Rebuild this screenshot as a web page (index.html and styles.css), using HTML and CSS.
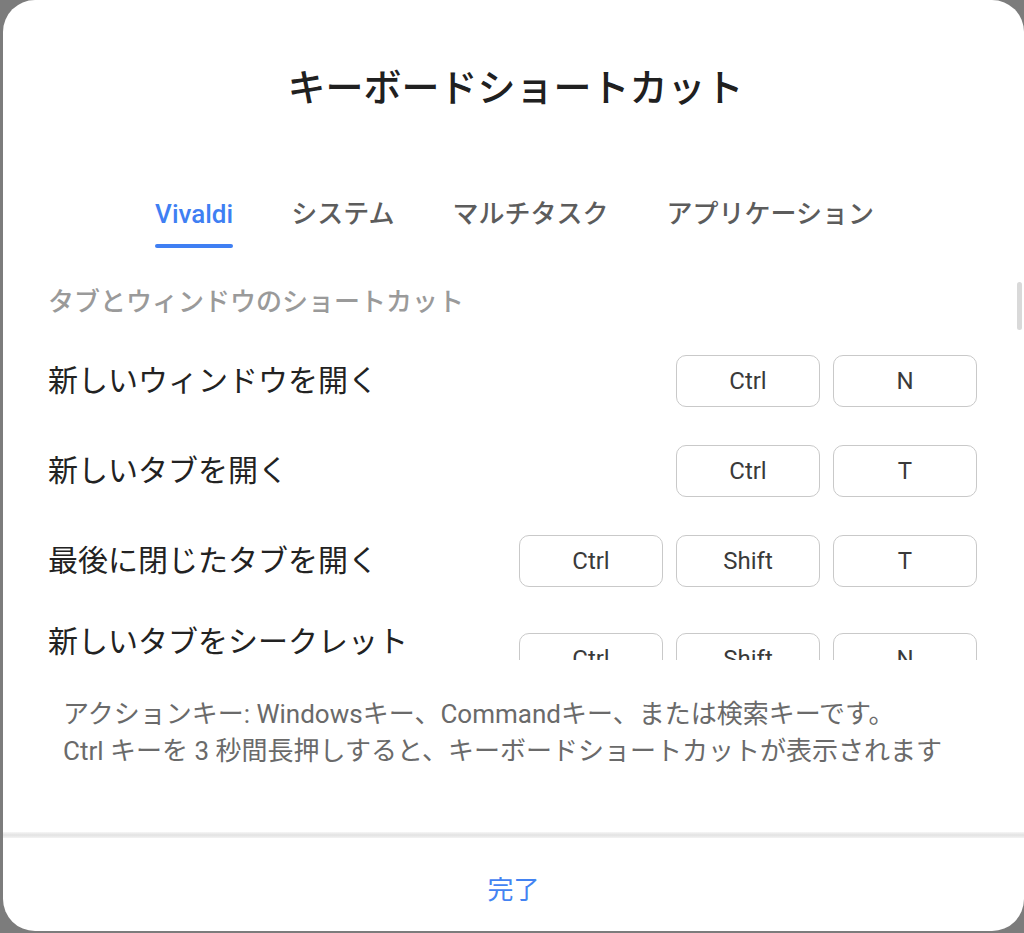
FILE: index.html
```html
<!DOCTYPE html>
<html lang="ja">
<head>
  <meta charset="UTF-8" />
  <title>キーボードショートカット</title>
  <link rel="stylesheet" href="styles.css">
</head>
<body>
  <div class="dialog">
    <h1 class="title">キーボードショートカット</h1>

    <div class="tabs">
      <div class="tab active">Vivaldi</div>
      <div class="tab">システム</div>
      <div class="tab">マルチタスク</div>
      <div class="tab">アプリケーション</div>
    </div>

    <div class="scroll">
      <div class="list">
        <div class="section">タブとウィンドウのショートカット</div>

        <div class="row">
          <div class="label">新しいウィンドウを開く</div>
          <div class="keys">
            <span class="key">Ctrl</span>
            <span class="key">N</span>
          </div>
        </div>

        <div class="row">
          <div class="label">新しいタブを開く</div>
          <div class="keys">
            <span class="key">Ctrl</span>
            <span class="key">T</span>
          </div>
        </div>

        <div class="row">
          <div class="label">最後に閉じたタブを開く</div>
          <div class="keys">
            <span class="key">Ctrl</span>
            <span class="key">Shift</span>
            <span class="key">T</span>
          </div>
        </div>

        <div class="row">
          <div class="label">新しいタブをシークレットウィンドウで開く</div>
          <div class="keys">
            <span class="key">Ctrl</span>
            <span class="key">Shift</span>
            <span class="key">N</span>
          </div>
        </div>
      </div>
      <div class="thumb"></div>
    </div>

    <div class="info">
      アクションキー: Windowsキー、Commandキー、または検索キーです。<br>
      Ctrl キーを 3 秒間長押しすると、キーボードショートカットが表示されます
    </div>

    <div class="divider"></div>
    <div class="footer">
      <button class="done">完了</button>
    </div>
  </div>
</body>
</html>
```

FILE: styles.css
```css
body {
  margin: 0;
  padding: 0;
  background-color: #7c7c7c;
  font-family: Roboto, "Noto Sans CJK JP", sans-serif;
  overflow: hidden;
}

.dialog {
  margin-left: 3px;
  width: 1021px;
  height: 931px;
  background: #fff;
  border-radius: 32px;
  display: flex;
  flex-direction: column;
  overflow: hidden;
}

.title {
  margin: 0;
  padding-top: 66px;
  padding-left: 4px;
  font-size: 38px;
  line-height: 44px;
  font-weight: 500;
  color: #202020;
  text-align: center;
}

.tabs {
  display: flex;
  justify-content: center;
  gap: 58px;
  margin-top: 87px;
  padding-left: 2px;
}

.tab {
  position: relative;
  font-size: 26px;
  line-height: 34px;
  font-weight: 500;
  color: #5c5c5c;
  padding-bottom: 17px;
}

.tab.active {
  color: #3f7ff3;
}

.tab.active::after {
  content: "";
  position: absolute;
  left: 0;
  right: 0;
  bottom: 0;
  height: 4px;
  border-radius: 2px;
  background: #3f7ff3;
}

.scroll {
  position: relative;
  height: 412px;
  overflow: hidden;
  padding: 39px 47px 0 45px;
  box-sizing: border-box;
}

.list {
  display: flex;
  flex-direction: column;
  gap: 38px;
}

.section {
  font-size: 26px;
  line-height: 30px;
  font-weight: 500;
  color: #9a9a9a;
}

.row {
  display: flex;
  justify-content: space-between;
  align-items: center;
}

.label {
  font-size: 30px;
  line-height: 34px;
  color: #222;
  max-width: 370px;
}

.keys {
  display: flex;
  gap: 13px;
}

.key {
  width: 144px;
  height: 52px;
  box-sizing: border-box;
  border: 1px solid #c9c9c9;
  border-radius: 10px;
  display: flex;
  align-items: center;
  justify-content: center;
  font-size: 24px;
  color: #3a3a3a;
}

.thumb {
  position: absolute;
  right: 2px;
  top: 34px;
  width: 5px;
  height: 48px;
  border-radius: 3px;
  background: #d9d9d9;
}

.info {
  height: 172px;
  box-sizing: border-box;
  padding: 36px 0 0 60px;
  font-size: 26px;
  line-height: 37px;
  color: #6a6a6a;
}

.divider {
  height: 6px;
  background: linear-gradient(#f6f6f6, #e2e2e2 50%, #f3f3f3);
}

.footer {
  flex: 1;
  display: flex;
  justify-content: center;
  padding-top: 34px;
}

.done {
  border: none;
  background: none;
  font-family: Roboto, "Noto Sans CJK JP", sans-serif;
  font-size: 26px;
  line-height: 36px;
  height: 36px;
  padding: 0;
  color: #4383f2;
  cursor: pointer;
}
```
